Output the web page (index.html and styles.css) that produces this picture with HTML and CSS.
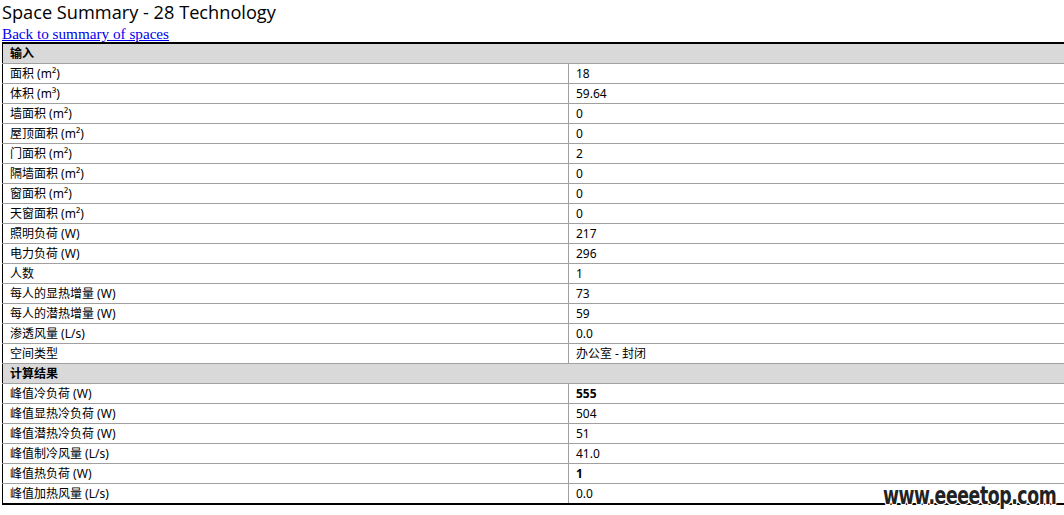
FILE: index.html
```html
<!DOCTYPE html>
<html>
<head>
<meta charset="utf-8">
<link rel="stylesheet" href="styles.css">
</head>
<body>
<h1 class="title">Space Summary - 28 Technology</h1>
<a class="back" href="#">Back to summary of spaces</a>
<table class="summary">
  <tr class="section"><td colspan="2">输入</td></tr>
  <tr><td class="k">面积 (m²)</td><td>18</td></tr>
  <tr><td class="k">体积 (m³)</td><td>59.64</td></tr>
  <tr><td class="k">墙面积 (m²)</td><td>0</td></tr>
  <tr><td class="k">屋顶面积 (m²)</td><td>0</td></tr>
  <tr><td class="k">门面积 (m²)</td><td>2</td></tr>
  <tr><td class="k">隔墙面积 (m²)</td><td>0</td></tr>
  <tr><td class="k">窗面积 (m²)</td><td>0</td></tr>
  <tr><td class="k">天窗面积 (m²)</td><td>0</td></tr>
  <tr><td class="k">照明负荷 (W)</td><td>217</td></tr>
  <tr><td class="k">电力负荷 (W)</td><td>296</td></tr>
  <tr><td class="k">人数</td><td>1</td></tr>
  <tr><td class="k">每人的显热增量 (W)</td><td>73</td></tr>
  <tr><td class="k">每人的潜热增量 (W)</td><td>59</td></tr>
  <tr><td class="k">渗透风量 (L/s)</td><td>0.0</td></tr>
  <tr><td class="k">空间类型</td><td>办公室 - 封闭</td></tr>
  <tr class="section"><td colspan="2">计算结果</td></tr>
  <tr><td class="k">峰值冷负荷 (W)</td><td class="b">555</td></tr>
  <tr><td class="k">峰值显热冷负荷 (W)</td><td>504</td></tr>
  <tr><td class="k">峰值潜热冷负荷 (W)</td><td>51</td></tr>
  <tr><td class="k">峰值制冷风量 (L/s)</td><td>41.0</td></tr>
  <tr><td class="k">峰值热负荷 (W)</td><td class="b">1</td></tr>
  <tr><td class="k">峰值加热风量 (L/s)</td><td>0.0</td></tr>
</table>
<div class="watermark">www.eeeetop.com</div>
</body>
</html>
```
FILE: styles.css
```css
html, body {
  margin: 0;
  padding: 0;
}
body {
  padding: 0 0 0 2px;
  background: #fff;
  overflow: hidden;
  position: relative;
  height: 515px;
}
.title {
  margin: 0;
  font-family: "Open Sans", "Noto Sans", sans-serif;
  font-weight: normal;
  font-size: 18.2px;
  line-height: 25px;
  color: #000;
}
.back {
  display: block;
  font-family: "Liberation Serif", serif;
  font-size: 15.2px;
  line-height: 17px;
  color: #0000ee;
  text-decoration: underline;
  width: max-content;
}
.summary {
  border-collapse: collapse;
  width: 1100px;
  border-top: 2px solid #000;
  border-left: 1px solid #000;
  border-bottom: 2px solid #000;
  font-family: "Noto Sans", "Noto Sans CJK SC", sans-serif;
  font-size: 12px;
  color: #000;
}
.summary td {
  height: 19px;
  padding: 0 0 0 7px;
  border-bottom: 1px solid #a0a0a0;
  vertical-align: middle;
  line-height: 14px;
}
.summary td.k {
  width: 558px;
  border-right: 1px solid #a0a0a0;
}
.summary .section td {
  background: #d9d9d9;
  font-weight: bold;
}
.summary td.b {
  font-weight: bold;
}
.watermark {
  position: absolute;
  left: 883px;
  top: 482px;
  font-family: "DejaVu Sans Condensed", "DejaVu Sans", sans-serif;
  font-weight: bold;
  font-size: 24px;
  letter-spacing: -0.5px;
  color: #222;
  text-shadow: 1px 0 #fff, -1px 0 #fff, 0 1px #fff, 0 -1px #fff, 1px 1px #fff, -1px -1px #fff, 1px -1px #fff, -1px 1px #fff;
  transform-origin: left top;
  transform: scaleX(0.8);
}
```
